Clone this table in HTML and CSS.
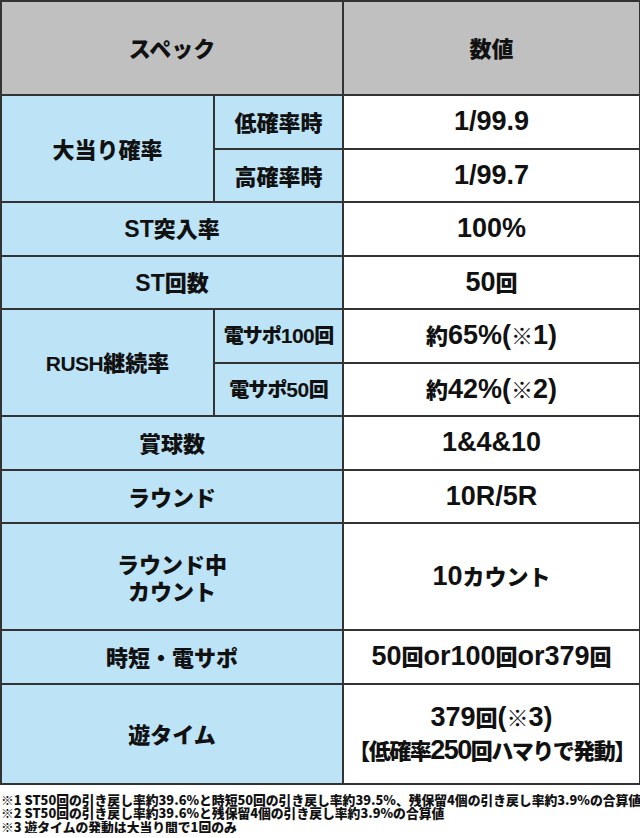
FILE: index.html
```html
<!DOCTYPE html>
<html lang="ja">
<head>
<meta charset="utf-8">
<link rel="stylesheet" href="styles.css">
</head>
<body>
<table class="spec">
  <colgroup><col class="c1"><col class="c2"><col class="c3"></colgroup>
  <tr class="r-head"><th colspan="2">スペック</th><th>数値</th></tr>
  <tr class="r"><td class="lab" rowspan="2">大当り確率</td><td class="lab">低確率時</td><td class="val"><span class="n">1/99.9</span></td></tr>
  <tr class="r"><td class="lab">高確率時</td><td class="val"><span class="n">1/99.7</span></td></tr>
  <tr class="r"><td class="lab" colspan="2"><span class="ln">ST</span>突入率</td><td class="val"><span class="n">100%</span></td></tr>
  <tr class="r"><td class="lab" colspan="2"><span class="ln">ST</span>回数</td><td class="val"><span class="n">50</span>回</td></tr>
  <tr class="r"><td class="lab" rowspan="2"><span class="ln rush">RUSH</span>継続率</td><td class="lab sm">電サポ<span class="ls">100</span>回</td><td class="val">約<span class="n">65%(</span>※<span class="n">1)</span></td></tr>
  <tr class="r"><td class="lab sm">電サポ<span class="ls">50</span>回</td><td class="val">約<span class="n">42%(</span>※<span class="n">2)</span></td></tr>
  <tr class="r"><td class="lab" colspan="2">賞球数</td><td class="val"><span class="n">1&amp;4&amp;10</span></td></tr>
  <tr class="r"><td class="lab" colspan="2">ラウンド</td><td class="val"><span class="n">10R/5R</span></td></tr>
  <tr class="r-tall"><td class="lab two" colspan="2">ラウンド中<br>カウント</td><td class="val"><span class="n">10</span>カウント</td></tr>
  <tr class="r"><td class="lab" colspan="2">時短・電サポ</td><td class="val"><span class="n">50</span>回<span class="n">or100</span>回<span class="n">or379</span>回</td></tr>
  <tr class="r-yu"><td class="lab" colspan="2">遊タイム</td><td class="val yu"><span class="n">379</span>回<span class="n">(</span>※<span class="n">3)</span><br><span class="tight">【低確率<span class="n">250</span>回ハマりで発動】</span></td></tr>
</table>
<div class="notes">
  <p>※1 ST50回の引き戻し率約39.6%と時短50回の引き戻し率約39.5%、残保留4個の引き戻し率約3.9%の合算値</p>
  <p>※2 ST50回の引き戻し率約39.6%と残保留4個の引き戻し率約3.9%の合算値</p>
  <p>※3 遊タイムの発動は大当り間で1回のみ</p>
</div>
</body>
</html>
```
FILE: styles.css
```css
html, body {
  margin: 0;
  padding: 0;
  background: #fff;
}
body {
  font-family: "Liberation Sans", "Noto Sans CJK JP", sans-serif;
  color: #111;
  font-weight: 700;
}
.spec {
  border-collapse: collapse;
  width: 639px;
  table-layout: fixed;
}
.c1 { width: 213px; }
.c2 { width: 129px; }
.c3 { width: 297px; }
.spec th, .spec td {
  border: 2px solid #333;
  padding: 0;
  text-align: center;
  vertical-align: middle;
  line-height: 1.15;
}
.spec th {
  background: #c0c0c0;
  font-size: 22px;
  font-weight: 900;
  font-family: "Noto Sans CJK JP", sans-serif;
}
.r-head { height: 94px; }
.r { height: 53.5px; }
.r-tall { height: 107px; }
.r-yu { height: 100px; }
.lab {
  background: #bde3f7;
  font-size: 22px;
  font-weight: 900;
  font-family: "Noto Sans CJK JP", sans-serif;
}
.spec .lab.two { line-height: 27px; }
.ln {
  font-family: "Liberation Sans", sans-serif;
  font-weight: 700;
  font-size: 23px;
}
.ln.rush { font-size: 21px; letter-spacing: -0.5px; }
.lab.sm { font-size: 20px; letter-spacing: -1px; }
.ls {
  font-family: "Liberation Sans", sans-serif;
  font-weight: 700;
  font-size: 21px;
  letter-spacing: -0.5px;
}
.val {
  background: #fff;
  font-size: 22px;
  font-weight: 900;
  font-family: "Noto Sans CJK JP", sans-serif;
}
.n {
  font-family: "Liberation Sans", sans-serif;
  font-weight: 700;
  font-size: 27px;
}
.spec .val.yu { line-height: 1.2; }
.tight { letter-spacing: -1.5px; }
.notes {
  padding: 8px 0 0 1px;
  font-family: "Noto Sans CJK JP", sans-serif;
  font-weight: 900;
  font-size: 12.8px;
  line-height: 13.5px;
}
.notes p { margin: 0; white-space: nowrap; }
```
